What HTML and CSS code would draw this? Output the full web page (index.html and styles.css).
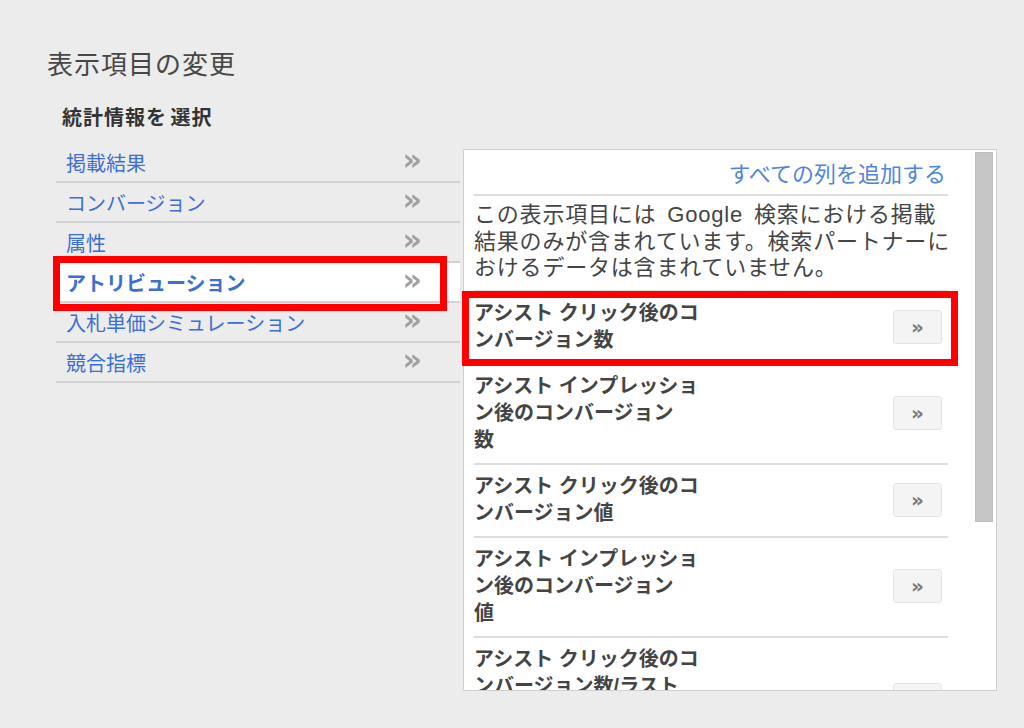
FILE: index.html
```html
<!DOCTYPE html>
<html lang="ja">
<head>
<meta charset="utf-8">
<title>表示項目の変更</title>
<link rel="stylesheet" href="styles.css">
</head>
<body>
<div class="page">
  <h1 class="title">表示項目の変更</h1>
  <h2 class="subtitle">統計情報を 選択</h2>
  <div class="main">
    <ul class="nav">
      <li class="nav-item"><span>掲載結果</span><span class="chev">»</span></li>
      <li class="nav-item"><span>コンバージョン</span><span class="chev">»</span></li>
      <li class="nav-item"><span>属性</span><span class="chev">»</span></li>
      <li class="nav-item active"><span>アトリビューション</span><span class="chev">»</span><span class="mark mark-nav"></span></li>
      <li class="nav-item"><span>入札単価シミュレーション</span><span class="chev">»</span></li>
      <li class="nav-item"><span>競合指標</span><span class="chev">»</span></li>
    </ul>
    <div class="panel">
      <div class="panel-content">
        <div class="add-all"><a class="add-link">すべての列を追加する</a></div>
        <p class="desc">この表示項目には Google 検索における掲載<br>結果のみが含まれています。検索パートナーに<br>おけるデータは含まれていません。</p>
        <div class="metric">
          <span class="metric-name">アシスト クリック後のコ<br>ンバージョン数</span>
          <button class="add-btn">»</button>
          <span class="mark mark-row"></span>
        </div>
        <div class="metric">
          <span class="metric-name">アシスト インプレッショ<br>ン後のコンバージョン<br>数</span>
          <button class="add-btn">»</button>
        </div>
        <div class="metric">
          <span class="metric-name">アシスト クリック後のコ<br>ンバージョン値</span>
          <button class="add-btn">»</button>
        </div>
        <div class="metric">
          <span class="metric-name">アシスト インプレッショ<br>ン後のコンバージョン<br>値</span>
          <button class="add-btn">»</button>
        </div>
        <div class="metric">
          <span class="metric-name">アシスト クリック後のコ<br>ンバージョン数/ラスト<br>クリック コンバージョ<br>ン数</span>
          <button class="add-btn">»</button>
        </div>
      </div>
      <div class="scrollbar"><div class="thumb"></div></div>
    </div>
  </div>
</div>
</body>
</html>
```
FILE: styles.css
```css
html, body {
  margin: 0;
  padding: 0;
  background: #ececec;
  font-family: "Liberation Sans", "Noto Sans CJK JP", "Noto Sans", sans-serif;
  color: #444;
}

.page {
  padding: 48px 0 0 47px;
  height: 680px;
  overflow: hidden;
}

.title {
  margin: 0;
  font-size: 26px;
  line-height: 34px;
  font-weight: normal;
  letter-spacing: 1px;
  color: #474747;
}

.subtitle {
  margin: 22px 0 0 15px;
  font-size: 20px;
  line-height: 28px;
  font-weight: bold;
  letter-spacing: 1px;
  word-spacing: -3px;
  color: #333;
}

.main {
  display: flex;
  align-items: flex-start;
  margin: 11px 0 0 9px;
}

.nav {
  list-style: none;
  margin: 0;
  padding: 0;
  width: 404px;
  flex: none;
}

.nav-item {
  position: relative;
  display: flex;
  justify-content: space-between;
  align-items: center;
  height: 38px;
  padding: 0 38px 0 10px;
  border-bottom: 2px solid #d2d2d2;
  font-size: 20px;
  color: #3b6fd2;
}

.nav-item.active {
  background: #fff;
  font-weight: bold;
}

.chev {
  font-family: "DejaVu Sans", sans-serif;
  font-weight: bold;
  font-size: 30px;
  color: #a0a0a0;
  line-height: 1;
  margin-top: -4px;
}

.mark {
  position: absolute;
  border: 7px solid #ff0000;
  box-sizing: border-box;
  pointer-events: none;
  z-index: 2;
}

.mark-nav {
  left: -3px;
  top: -7px;
  width: 394px;
  height: 55px;
}

.panel {
  display: flex;
  flex: none;
  margin: 6px 0 0 3px;
  width: 534px;
  height: 542px;
  box-sizing: border-box;
  background: #fff;
  border: 1px solid #cfcfcf;
}

.panel-content {
  flex: 1;
  min-width: 0;
  padding: 0 27px 0 10px;
  overflow-x: visible;
  overflow-y: clip;
}

.add-all {
  text-align: right;
  padding: 10px 2px 4px 0;
  border-bottom: 2px solid #dedede;
}

.add-link {
  font-size: 22px;
  line-height: 30px;
  color: #4f84da;
  cursor: pointer;
}

.desc {
  margin: 0;
  padding: 6px 0 8px;
  font-size: 22px;
  line-height: 26.5px;
  letter-spacing: 0.8px;
  word-spacing: 4px;
  color: #444;
  white-space: nowrap;
}

.metric {
  position: relative;
  display: flex;
  justify-content: space-between;
  align-items: center;
  padding: 8px 6px 9px 0;
  border-top: 2px solid #dedede;
}

.metric-name {
  font-size: 20px;
  line-height: 27px;
  font-weight: bold;
  color: #444;
  white-space: nowrap;
}

.add-btn {
  flex: none;
  width: 49px;
  height: 34px;
  padding: 0;
  background: #f4f4f4;
  border: 1px solid #e4e4e4;
  border-radius: 3px;
  font-family: "DejaVu Sans", sans-serif;
  font-weight: bold;
  font-size: 20px;
  line-height: 1;
  color: #7a7a7a;
}

.mark-row {
  left: -12px;
  top: -1px;
  width: 496px;
  height: 75px;
}

.scrollbar {
  flex: none;
  width: 18px;
  margin: 2px 3px 0 0;
}

.thumb {
  height: 370px;
  background: #c6c6c6;
  border: 1px solid #bdbdbd;
  box-sizing: border-box;
}
```
